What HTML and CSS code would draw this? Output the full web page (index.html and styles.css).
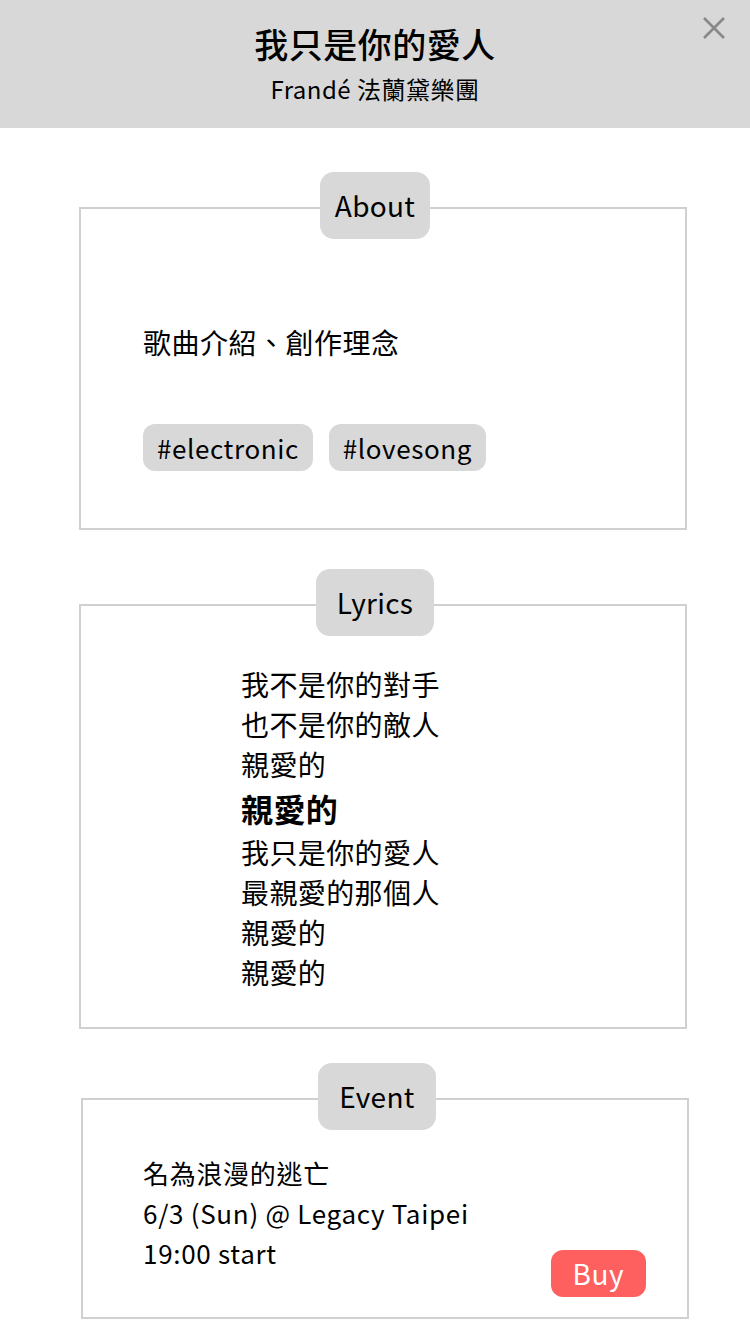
FILE: index.html
```html
<!DOCTYPE html>
<html lang="zh-Hant">
<head>
  <meta charset="UTF-8">
  <meta name="viewport" content="width=device-width, initial-scale=1.0">
  <title>我只是你的愛人</title>
  <link rel="stylesheet" href="styles.css">
</head>
<body>
  <header class="top-bar">
    <h1 class="song-title">我只是你的愛人</h1>
    <p class="song-artist">Frandé 法蘭黛樂團</p>
    <button type="button" class="close-button" aria-label="Close">
      <svg width="24" height="24" viewBox="0 0 24 24">
        <path d="M2 2 L22 22 M22 2 L2 22" stroke="#888" stroke-width="2.6" fill="none"/>
      </svg>
    </button>
  </header>

  <main class="content">
    <section class="card card-about">
      <h2 class="card-label">About</h2>
      <div class="card-body about-body">
        <p class="about-text">歌曲介紹、創作理念</p>
        <div class="tags">
          <span class="tag">#electronic</span>
          <span class="tag">#lovesong</span>
        </div>
      </div>
    </section>

    <section class="card card-lyrics">
      <h2 class="card-label">Lyrics</h2>
      <div class="card-body lyrics">
        <p>我不是你的對手</p>
        <p>也不是你的敵人</p>
        <p>親愛的</p>
        <p class="lyrics-strong">親愛的</p>
        <p>我只是你的愛人</p>
        <p>最親愛的那個人</p>
        <p>親愛的</p>
        <p>親愛的</p>
      </div>
    </section>

    <section class="card card-event">
      <h2 class="card-label">Event</h2>
      <div class="card-body event-body">
        <div class="event-info">
          <p>名為浪漫的逃亡</p>
          <p>6/3 (Sun) @ Legacy Taipei</p>
          <p>19:00 start</p>
        </div>
        <button type="button" class="buy-button">Buy</button>
      </div>
    </section>
  </main>
</body>
</html>
```

FILE: styles.css
```css
body {
  font-family: "Noto Sans CJK TC", "Noto Sans", sans-serif;
  margin: 0;
  padding: 0;
  background-color: #fff;
  color: #000;
}

p {
  margin: 0;
}

.top-bar {
  position: relative;
  height: 128px;
  background-color: #d8d8d8;
  display: flex;
  flex-direction: column;
  align-items: center;
  box-sizing: border-box;
  padding-top: 22px;
}

.song-title {
  margin: 0;
  font-size: 34px;
  font-weight: 500;
  letter-spacing: 0.5px;
  line-height: 44px;
}

.song-artist {
  margin-top: 3px;
  font-size: 24px;
  letter-spacing: 0.5px;
  line-height: 40px;
}

.close-button {
  position: absolute;
  top: 16px;
  right: 24px;
  padding: 0;
  border: none;
  background: none;
  cursor: pointer;
  line-height: 0;
}

.content {
  display: flex;
  flex-direction: column;
  padding-top: 79px;
  padding-bottom: 14px;
}

.card {
  display: flex;
  flex-direction: column;
  width: 608px;
  margin-left: 79px;
  border: 2px solid #d0d0d0;
  box-sizing: border-box;
}

/* labels sit on the top border, centred on the page rather than the card */
.card-label {
  align-self: center;
  margin: -37px 16px 0 0;
  padding: 0 21px;
  height: 67px;
  line-height: 67px;
  font-size: 28px;
  font-weight: normal;
  letter-spacing: 0.3px;
  background-color: #d8d8d8;
  border-radius: 14px;
}

.card-about .card-label {
  padding: 0 15px;
}

.about-body {
  padding: 83px 0 57px 62px;
}

.about-text {
  font-size: 28px;
  letter-spacing: 0.5px;
  line-height: 40px;
}

.tags {
  display: flex;
  gap: 16px;
  margin-top: 62px;
}

.tag {
  height: 47px;
  line-height: 47px;
  padding: 0 14px;
  font-size: 26px;
  letter-spacing: 0.6px;
  background-color: #d8d8d8;
  border-radius: 12px;
}

.card-lyrics {
  margin-top: 74px;
}

.lyrics {
  padding: 28px 0 35px 160px;
  font-size: 28px;
  letter-spacing: 0.4px;
  line-height: 40px;
}

.lyrics-strong {
  font-size: 32px;
  font-weight: bold;
  line-height: 48px;
}

.card-event {
  margin-top: 69px;
  margin-left: 81px;
}

.event-body {
  display: flex;
  justify-content: space-between;
  align-items: flex-end;
  padding: 23px 41px 20px 60px;
}

.event-info {
  font-size: 26px;
  letter-spacing: 0.7px;
  line-height: 40px;
  padding-bottom: 24px;
}

.buy-button {
  height: 47px;
  padding: 0 22px;
  border: none;
  border-radius: 12px;
  background-color: #fe5f5f;
  color: #fff;
  font-family: inherit;
  font-size: 28px;
  letter-spacing: 0.5px;
  line-height: 47px;
  cursor: pointer;
}
```
